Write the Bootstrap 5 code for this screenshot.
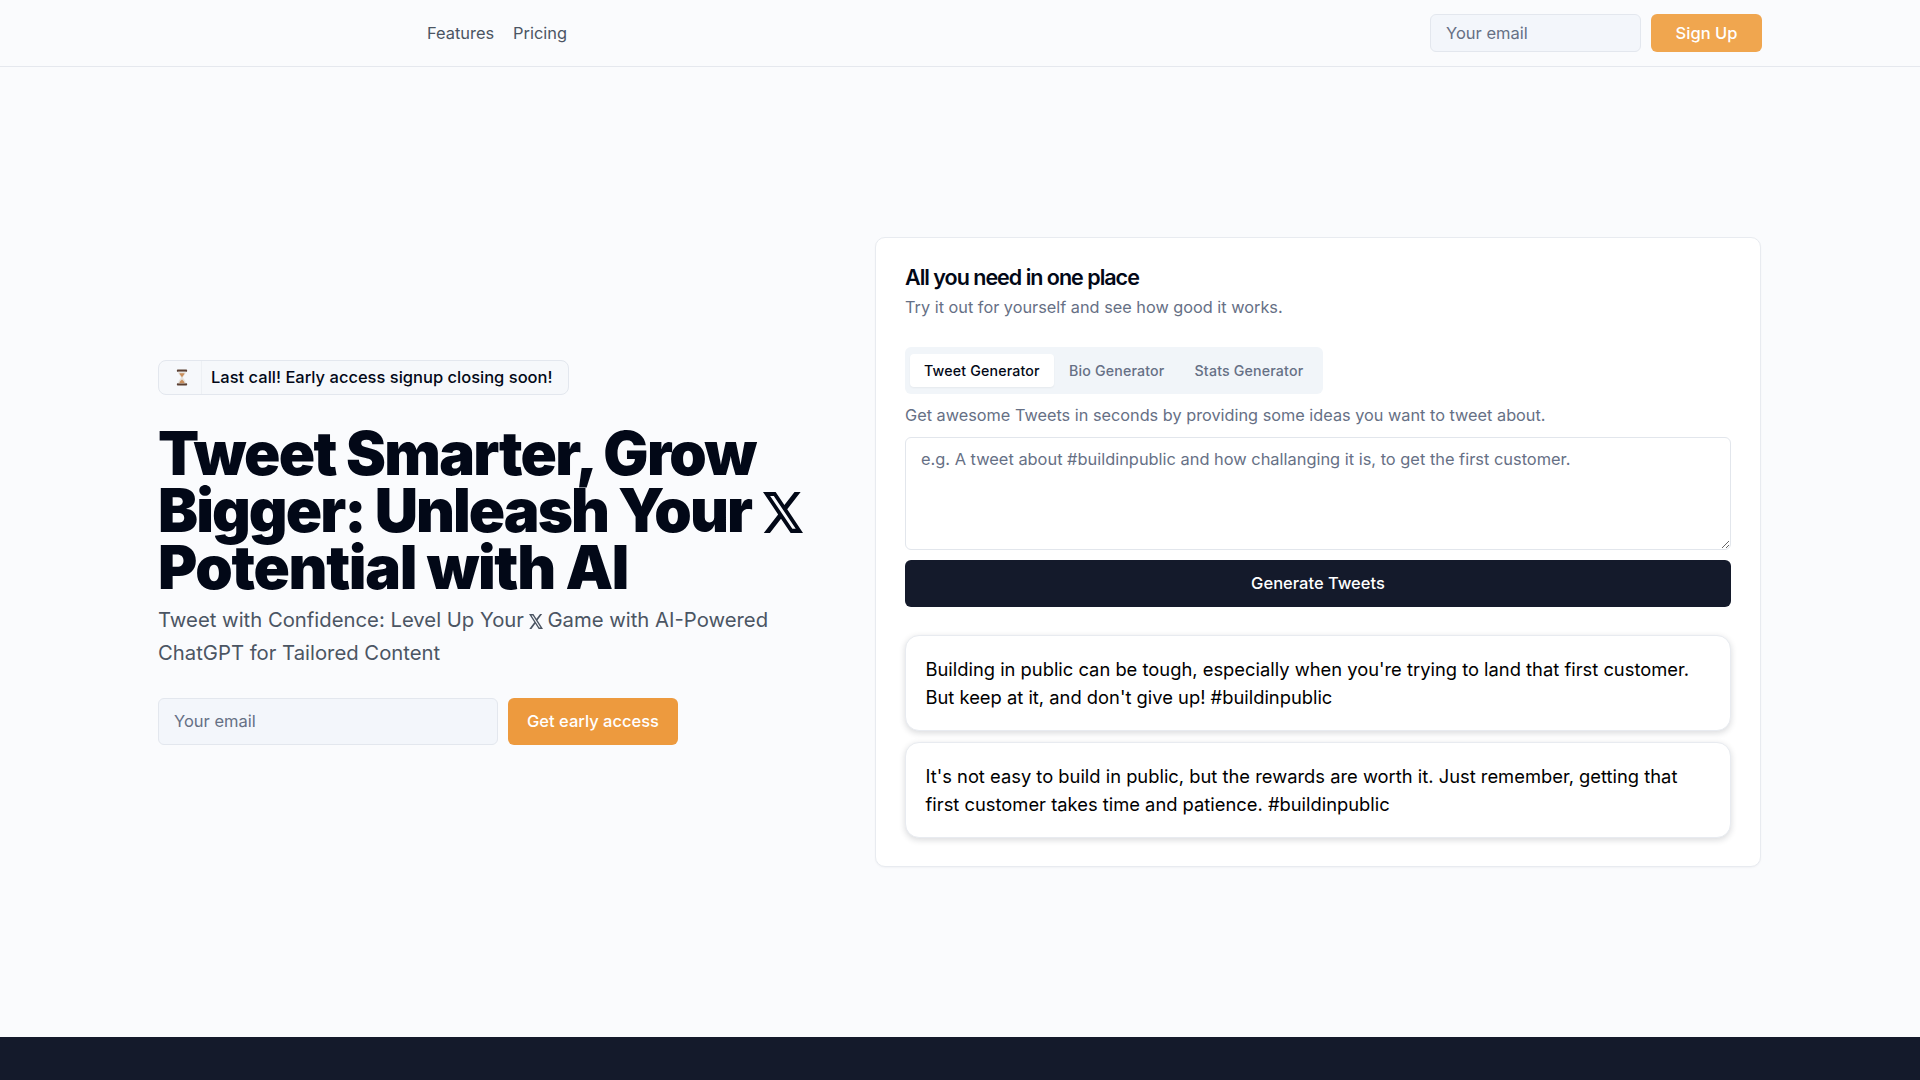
<!DOCTYPE html>
<html lang="en">
<head>
  <meta charset="UTF-8" />
  <meta name="viewport" content="width=device-width, initial-scale=1.0"/>
  <title>Tweet Smarter, Grow Bigger</title>
  <link href="https://cdn.jsdelivr.net/npm/bootstrap@5.3.3/dist/css/bootstrap.min.css" rel="stylesheet">
  <style>
    body { background: #fafbfd; font-family: Inter, "Liberation Sans", sans-serif; color: #020817; }
    .page-wrap { width: 1604px; margin: 0 auto; }
    .top-bar { height: 67px; border-bottom: 1px solid #e5e8ee; }
    .top-links { margin-left: 269px; gap: 19px; }
    .top-links a { color: #4b5563; font-size: 16.4px; text-decoration: none; }
    .pair-form { gap: 10px; }
    .field-soft { background: #f3f6fb; border: 1px solid #e3e7ee; border-radius: 6px; color: #020817; font-size: 16.5px; padding: 0 15px; }
    .field-soft::placeholder { color: #667085; opacity: 1; }
    .top-bar .field-soft { width: 211px; height: 38px; }
    .btn-orange { background: #ed9a3e; border: 0; border-radius: 6px; color: #fff; font-size: 16.5px; font-weight: 500; }
    .top-bar .btn-orange { background: #f0a64f; width: 111px; height: 38px; padding: 0; }
    .hero-area { height: 970px; }
    .hero-left { width: 717px; }
    .hero-right { width: 886px; }
    .notice-pill { height: 35px; width: 411px; border: 1px solid #e3e7ee; border-radius: 8px; background: #f6f8fb; font-size: 16.5px; font-weight: 500; margin-bottom: 30px; }
    .notice-icon { width: 43px; height: 100%; margin-right: 9px; border-right: 1px solid #edf0f4; }
    .notice-icon svg { margin-left: 4px; }
    .hero-title { font-size: 60px; line-height: 57px; font-weight: 900; letter-spacing: -1.7px; color: #020817; margin-bottom: 7px; }
    .title-line { display: block; white-space: nowrap; }
    .title-tight { letter-spacing: -1.95px; }
    .title-loose { letter-spacing: -1.35px; }
    .hero-title svg { width: 40px; height: 41px; vertical-align: -1px; margin-left: 2px; }
    .hero-sub { font-size: 20.3px; line-height: 33px; color: #4b5563; width: 640px; margin-bottom: 29px; }
    .hero-sub svg { width: 14px; height: 15px; vertical-align: -2px; margin: 0 -1px; }
    .hero-form .field-soft { width: 340px; height: 47px; }
    .hero-form .btn-orange { width: 170px; height: 47px; padding: 0; }
    .demo-card { height: 630px; border: 1px solid #e8ebf0; border-radius: 10px; padding: 25px 29px; background: #fff; box-shadow: 0 1px 2px rgba(16,24,40,.04); }
    .demo-title { font-size: 21.5px; line-height: 28px; font-weight: 600; letter-spacing: -1px; margin: 0 0 4px; }
    .demo-muted { font-size: 16.3px; line-height: 24px; color: #667085; margin: 0; }
    .tab-strip { background: #f1f5f9; border-radius: 6px; width: 418px; height: 47px; padding: 0 5px; margin: 28px 0 9px; flex-wrap: nowrap; }
    .tab-strip .nav-link { font-size: 14.2px; font-weight: 500; color: #667085; height: 33px; padding: 0 15px; border-radius: 4px; letter-spacing: .012em; white-space: nowrap; }
    .tab-strip .nav-link.active { background: #fff; color: #020817; width: 144px; padding-left: 14px; box-shadow: 0 1px 2px rgba(0,0,0,.05); }
    .prompt-box { height: 113px; border: 1px solid #e2e6ec; border-radius: 6px; font-size: 16.4px; padding: 9px 15px; margin-top: 10px; color: #020817; }
    .prompt-box::placeholder { color: #667085; opacity: 1; }
    .btn-dark-wide { background: #141a2b; color: #fff; border: 0; border-radius: 6px; height: 47px; width: 100%; font-size: 16.5px; font-weight: 500; margin-top: 10px; margin-bottom: 28px; }
    .tweet-card { height: 96px; border: 1px solid #e8ebf0; border-radius: 14px; background: #fff; box-shadow: 0 2px 6px rgba(16,24,40,.16); padding: 19px 19.5px; font-size: 18.35px; line-height: 28px; color: #000; margin-bottom: 10.5px; }
    .page-foot { height: 43px; background: #141a2b; }
  </style>
</head>
<body>
  <header class="top-bar">
    <div class="page-wrap d-flex align-items-center justify-content-between h-100">
      <nav class="d-flex top-links">
        <a href="#">Features</a>
        <a href="#">Pricing</a>
      </nav>
      <form class="d-flex pair-form">
        <input class="field-soft" type="email" placeholder="Your email">
        <button class="btn btn-orange" type="button">Sign Up</button>
      </form>
    </div>
  </header>

  <main class="page-wrap d-flex align-items-center hero-area">
    <section class="hero-left">
      <div class="notice-pill d-flex align-items-center">
        <span class="notice-icon d-flex align-items-center justify-content-center">
          <svg width="12" height="17" viewBox="0 0 14 18" preserveAspectRatio="none">
            <rect x="1" y="0.5" width="12" height="2.5" rx="1" fill="#5b4033"/>
            <rect x="1" y="15" width="12" height="2.5" rx="1" fill="#5b4033"/>
            <path d="M2.5 3h9c0 3-3 4.5-3.5 6 .5 1.5 3.5 3 3.5 6h-9c0-3 3-4.5 3.5-6C5.500 7.500 2.500 6 2.500 3z" fill="#e6e2dc"/>
            <path d="M4 4.500h6C9.500 6.500 7.500 7.500 7 9 6.500 7.500 4.500 6.500 4 4.500z" fill="#c98e5b"/>
            <path d="M7 11c1 1 3 2 3 4H4c0-2 2-3 3-4z" fill="#c98e5b"/>
          </svg>
        </span>
        <span>Last call! Early access signup closing soon!</span>
      </div>
      <h1 class="hero-title">
        <span class="title-line">Tweet Smarter, Grow</span>
        <span class="title-line title-tight">Bigger: Unleash Your
          <svg viewBox="0 1.15 24 21.7" preserveAspectRatio="none" fill="#020817"><path d="M18.901 1.153h3.68l-8.04 9.19L24 22.846h-7.406l-5.8-7.584-6.638 7.584H.474l8.6-9.83L0 1.154h7.594l5.243 6.932ZM17.61 20.644h2.039L6.486 3.24H4.298Z"/></svg>
        </span>
        <span class="title-line title-loose">Potential with AI</span>
      </h1>
      <p class="hero-sub">Tweet with Confidence: Level Up Your
        <svg viewBox="0 1.15 24 21.7" preserveAspectRatio="none" fill="#4b5563"><path d="M18.901 1.153h3.68l-8.04 9.19L24 22.846h-7.406l-5.8-7.584-6.638 7.584H.474l8.6-9.83L0 1.154h7.594l5.243 6.932ZM17.61 20.644h2.039L6.486 3.24H4.298Z"/></svg>
        Game with AI-Powered ChatGPT for Tailored Content</p>
      <form class="hero-form d-flex pair-form m-0">
        <input class="field-soft" type="email" placeholder="Your email">
        <button class="btn btn-orange" type="button">Get early access</button>
      </form>
    </section>

    <section class="hero-right demo-card">
      <h2 class="demo-title">All you need in one place</h2>
      <p class="demo-muted">Try it out for yourself and see how good it works.</p>
      <ul class="nav tab-strip align-items-center">
        <li class="nav-item"><a class="nav-link active d-flex align-items-center" href="#">Tweet Generator</a></li>
        <li class="nav-item"><a class="nav-link d-flex align-items-center" href="#">Bio Generator</a></li>
        <li class="nav-item"><a class="nav-link d-flex align-items-center" href="#">Stats Generator</a></li>
      </ul>
      <p class="demo-muted">Get awesome Tweets in seconds by providing some ideas you want to tweet about.</p>
      <textarea class="form-control prompt-box" placeholder="e.g. A tweet about #buildinpublic and how challanging it is, to get the first customer."></textarea>
      <button class="btn btn-dark-wide" type="button">Generate Tweets</button>
      <div class="tweet-card">Building in public can be tough, especially when you're trying to land that first customer. But keep at it, and don't give up! #buildinpublic</div>
      <div class="tweet-card">It's not easy to build in public, but the rewards are worth it. Just remember, getting that first customer takes time and patience. #buildinpublic</div>
    </section>
  </main>

  <footer class="page-foot"></footer>

  <script src="https://cdn.jsdelivr.net/npm/bootstrap@5.3.3/dist/js/bootstrap.bundle.min.js"></script>
</body>
</html>
